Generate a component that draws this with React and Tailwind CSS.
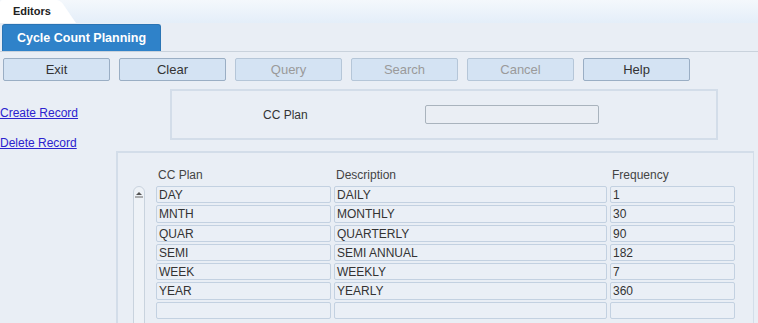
import React from "react";

const rows = [
  ["DAY", "DAILY", "1"],
  ["MNTH", "MONTHLY", "30"],
  ["QUAR", "QUARTERLY", "90"],
  ["SEMI", "SEMI ANNUAL", "182"],
  ["WEEK", "WEEKLY", "7"],
  ["YEAR", "YEARLY", "360"],
  ["", "", ""],
];

const buttons = [
  ["Exit", true],
  ["Clear", true],
  ["Query", false],
  ["Search", false],
  ["Cancel", false],
  ["Help", true],
];

function Cell({ w, children }) {
  return (
    <div
      className={`${w} h-[17.3px] shrink-0 rounded-[2px] border border-[#c3d1e1] bg-[#eaeff6] pl-[2px] text-[12px] leading-[17px] text-[#333]`}
    >
      {children}
    </div>
  );
}

export default function App() {
  return (
    <div className="relative h-[323px] w-[758px] overflow-hidden bg-[#e9eef5] font-['Liberation_Sans',Arial,sans-serif]">
      {/* top bar */}
      <div className="relative h-[23px] bg-gradient-to-b from-[#f4f8fc] to-[#e4eef9]">
        <svg className="absolute left-0 top-0" width="90" height="23" viewBox="0 0 90 23">
          <path d="M0 23 L0 3 Q0 0 3 0 L56 0 Q60 0 63 4 L76 23 Z" fill="#ffffff" />
        </svg>
        <span className="relative block pl-[13px] pt-[5px] text-[11px] font-bold leading-[13px] text-[#222]">
          Editors
        </span>
      </div>

      {/* tab row */}
      <div className="flex h-[29px] items-end border-b border-[#c9d2dc] pl-[2px]">
        <div className="flex h-[27px] w-[159px] items-center justify-center rounded-t-[3px] border border-b-0 border-[#2a74b4] bg-[#2f82c9] text-[12.5px] font-bold text-white">
          Cycle Count Planning
        </div>
      </div>

      {/* buttons */}
      <div className="flex gap-[9px] pl-[3px] pt-[6px]">
        {buttons.map(([label, enabled]) => (
          <div
            key={label}
            className={`flex h-[23px] w-[107px] items-center justify-center rounded-[2px] border bg-[#d4e3f3] text-[13px] ${
              enabled ? "border-[#9aaec4] text-[#333]" : "border-[#b5c6d8] text-[#9a9a9a]"
            }`}
          >
            {label}
          </div>
        ))}
      </div>

      {/* main */}
      <div className="mt-[8px] flex">
        <div className="flex w-[116px] shrink-0 flex-col pt-[17px]">
          <a className="text-[12px] leading-[14px] text-[#2b22cf] underline">Create Record</a>
          <a className="mt-[16px] text-[12px] leading-[14px] text-[#2b22cf] underline">Delete Record</a>
        </div>
        <div className="flex flex-col">
          <div className="ml-[54px] flex h-[51px] w-[548px] items-center border-2 border-[#d3dde9] pl-[91px]">
            <span className="w-[162px] text-[12px] text-[#333]">CC Plan</span>
            <div className="h-[19px] w-[174px] rounded-[2px] border border-[#a9b3bd] bg-[#eaeef4]" />
          </div>
          <div className="mt-[11px] h-[200px] w-[638px] border-2 border-r-[1px] border-[#d3dde9] pl-[15px] pt-[15px]">
            <div className="flex">
              <div className="w-[23px] shrink-0" />
              <div className="flex gap-[3px] text-[12px] leading-[14px] text-[#444]">
                <span className="w-[175px] pl-[2px]">CC Plan</span>
                <span className="w-[273px] pl-[2px]">Description</span>
                <span className="w-[125px] pl-[2px]">Frequency</span>
              </div>
            </div>
            <div className="mt-[4px] flex">
              <div className="flex h-[200px] w-[12px] shrink-0 flex-col items-center rounded-t-[6px] border border-[#c9d3de] bg-[#eef2f7] pt-[4px]">
                <svg width="8" height="7" viewBox="0 0 8 7">
                  <path d="M1 4 L4 1 L7 4 Z" fill="#555" />
                  <rect x="0" y="5.5" width="8" height="1" fill="#666" />
                </svg>
              </div>
              <div className="ml-[11px] flex flex-col gap-[2px]">
                {rows.map((r, i) => (
                  <div key={i} className="flex gap-[3px]">
                    <Cell w="w-[175px]">{r[0]}</Cell>
                    <Cell w="w-[273px]">{r[1]}</Cell>
                    <Cell w="w-[125px]">{r[2]}</Cell>
                  </div>
                ))}
              </div>
            </div>
          </div>
        </div>
      </div>
    </div>
  );
}
